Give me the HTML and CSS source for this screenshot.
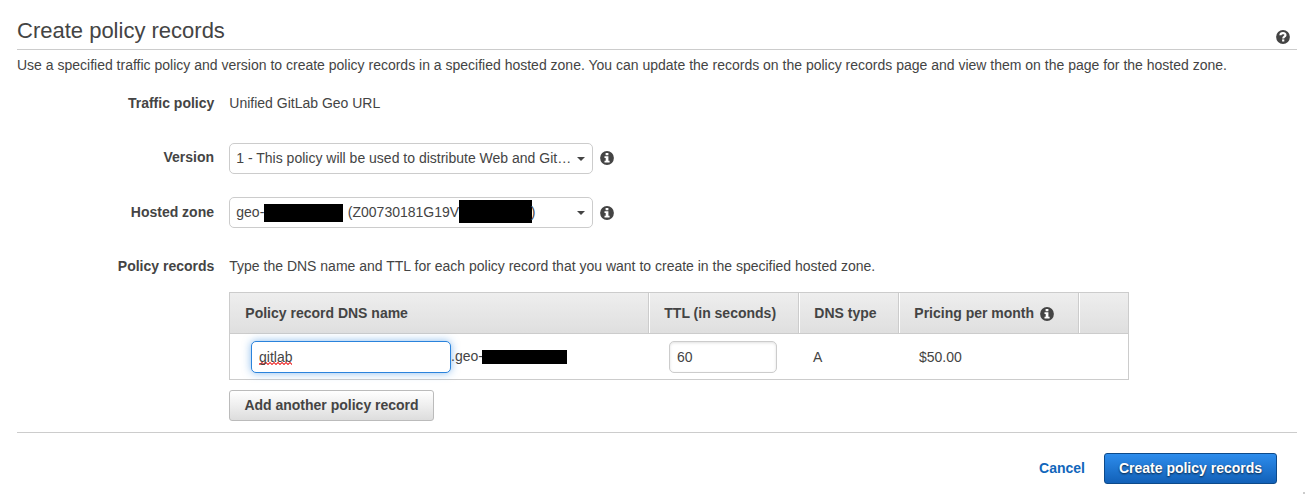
FILE: index.html
```html
<!DOCTYPE html>
<html lang="en">
<head>
<meta charset="utf-8">
<title>Create policy records</title>
<link rel="stylesheet" href="styles.css">
</head>
<body>
<svg class="defs" aria-hidden="true">
  <symbol id="info" viewBox="0 0 14 14">
    <circle cx="7" cy="7" r="6.9" fill="#444"/>
    <path d="M5.6 2h2.8v2.3H5.6zM4.5 5.2h3.9v4.5h1.2v1.7H4.5V9.7h1.2V6.9H4.5z" fill="#fff"/>
  </symbol>
</svg>
<main class="page">
  <header class="head">
    <h1 class="title">Create policy records</h1>
    <svg class="icon help" viewBox="0 0 14 14" role="img" aria-label="Help">
      <circle cx="7" cy="7" r="6.9" fill="#444"/>
      <path d="M4.4 5.3C4.5 2.5 9.6 2.4 9.5 5.1 9.4 6.8 7.2 6.6 7.2 8.5" fill="none" stroke="#fff" stroke-width="2.1"/>
      <path d="M6.1 9.4h2.2v2.1H6.1z" fill="#fff"/>
    </svg>
  </header>
  <p class="intro">Use a specified traffic policy and version to create policy records in a specified hosted zone. You can update the records on the policy records page and view them on the page for the hosted zone.</p>

  <div class="row row-policy"><span class="label">Traffic policy</span><span>Unified GitLab Geo URL</span></div>
  <div class="row row-select">
    <span class="label">Version</span>
    <div class="select"><span class="value">1 - This policy will be used to distribute Web and Git…</span><i class="caret"></i></div>
    <svg class="icon info"><use href="#info"/></svg>
  </div>
  <div class="row row-select">
    <span class="label">Hosted zone</span>
    <div class="select"><span class="value">geo-<i class="mask mask-name"></i>(Z00730181G19V<i class="mask mask-id"></i><span class="paren">)</span></span><i class="caret"></i></div>
    <svg class="icon info"><use href="#info"/></svg>
  </div>
  <div class="row row-records"><span class="label">Policy records</span><span>Type the DNS name and TTL for each policy record that you want to create in the specified hosted zone.</span></div>

  <section class="records">
    <div class="grid thead">
      <div class="th">Policy record DNS name</div>
      <div class="th">TTL (in seconds)</div>
      <div class="th">DNS type</div>
      <div class="th">Pricing per month<svg class="icon th-icon"><use href="#info"/></svg></div>
      <div class="th"></div>
    </div>
    <div class="grid tbody">
      <div class="td dns"><div class="field focused"><span class="typo">gitlab</span></div><span class="suffix">.geo-<i class="mask mask-domain"></i></span></div>
      <div class="td ttl"><div class="field short">60</div></div>
      <div class="td type">A</div>
      <div class="td price">$50.00</div>
      <div class="td"></div>
    </div>
  </section>
  <button class="btn add">Add another policy record</button>

  <footer class="foot">
    <a class="cancel">Cancel</a>
    <button class="btn primary">Create policy records</button>
  </footer>
</main>
<i class="grip"></i>
</body>
</html>
```
FILE: styles.css
```css
* { box-sizing: border-box; }
body {
  margin: 0;
  background: #fff;
  color: #444;
  font: 14px/20px "Liberation Sans", Arial, sans-serif;
  overflow: hidden;
}
.defs { display: none; }
.page { padding: 0 8px 0 17px; }
.icon { width: 14px; height: 14px; flex: none; display: block; }
.head {
  display: flex;
  justify-content: space-between;
  height: 50px;
  border-bottom: 1px solid #ccc;
}
.title { margin: 16px 0 0; font-size: 22px; line-height: 30px; font-weight: 400; }
.help { margin: 30px 7px 0 0; }
.intro { margin: 5px 0 0; white-space: nowrap; }
.row { display: flex; }
.label { width: 197.3px; margin-right: 15px; text-align: right; font-weight: 700; flex: none; }
.row-policy { margin-top: 18px; }
.row-policy + .row-select { margin-top: 30px; }
.row-select { height: 31px; margin-top: 23px; }
.row-select .label { width: 197px; padding-top: 4px; }
.row-select + .row-select .label { padding-top: 5px; }
.row-records { margin-top: 28px; }
.select {
  display: flex;
  align-items: center;
  justify-content: space-between;
  width: 364px;
  height: 31px;
  padding: 0 7px 2px 6px;
  border: 1px solid #ccc;
  border-radius: 5px;
  white-space: nowrap;
}
.value { display: flex; align-items: center; height: 27px; padding-left: 0.3px; }
.caret { border: 4px solid transparent; border-top-color: #444; border-bottom: 0; margin-top: 2px; }
.info { margin: 8px 0 0 7px; }
.row-select + .row-select .info { margin-top: 9px; }
.row-policy + .row-select .info { margin-top: 8px; }
.row-policy + .row-select .label { padding-top: 4px; }
.mask { display: block; background: #000; flex: none; }
.mask-name { width: 79px; height: 18px; margin: 2px 4.5px 0 0; }
.mask-id { width: 73px; height: 23px; }
.paren { margin-left: -1.3px; }
.mask-domain { width: 85px; height: 14px; margin: 2px 0 0 -1px; }
.records { width: 900px; height: 88px; margin: 16px 0 0 212px; border: 1px solid #ccc; }
.grid { display: grid; grid-template-columns: 419px 150px 100px 180px 49px; }
.thead {
  height: 41px;
  border-bottom: 1px solid #ccc;
  background: linear-gradient(#eee, #dfdfdf);
  font-weight: 700;
}
.th { display: flex; align-items: center; padding-left: 15.3px; border-right: 1px solid #ccc; }
.th + .th { padding-left: 14.3px; border-left: 1px solid #fff; }
.th:last-child { border-right: 0; }
.th-icon { margin: 2px 0 0 6px; }
.tbody { height: 45px; }
.td { display: flex; align-items: center; }
.dns { padding-left: 21px; }
.ttl { padding-left: 20px; }
.type { padding-left: 14px; }
.price { padding-left: 20px; }
.field {
  width: 200px;
  height: 32px;
  padding: 5px 7px;
  border: 1px solid #ccc;
  border-radius: 5px;
  box-shadow: inset 0 1px 3px rgba(0, 0, 0, .12);
  background: #fff;
}
.focused { border-color: #2a83dc; box-shadow: 0 0 8px rgba(42, 131, 220, .55); }
.short { width: 108px; }
.typo {
  display: inline-block;
  height: 18px;
  line-height: 20px;
  background: radial-gradient(circle at 1px 1px, #e33 0.6px, transparent 1.1px) 0 100% / 4px 2px repeat-x,
              radial-gradient(circle at 1px 1px, #e33 0.6px, transparent 1.1px) 2px calc(100% - 1px) / 4px 2px repeat-x;
}
.suffix { display: flex; align-items: center; margin-top: -2px; }
.btn {
  display: block;
  height: 31px;
  padding: 0 0 2px;
  border-radius: 3px;
  font: 700 14px/20px "Liberation Sans", Arial, sans-serif;
}
.add {
  width: 205px;
  margin: 10px 0 0 212px;
  border: 1px solid #bbb;
  color: #444;
  background: linear-gradient(#fff, #ddd);
}
.foot {
  display: flex;
  justify-content: flex-end;
  margin-top: 11px;
  padding: 20px 20px 0 0;
  border-top: 1px solid #ccc;
}
.cancel { margin: 5px 19px 0 0; color: #1166bb; font-weight: 700; }
.primary {
  width: 173px;
  border: 1px solid #0d4a8a;
  color: #fff;
  background: linear-gradient(#2d8cec, #1261b8);
  text-shadow: 0 1px 2px rgba(0, 0, 0, .7);
}
.grip {
  position: absolute;
  right: 0;
  bottom: 0;
  width: 2px;
  height: 2px;
  background: #ccc;
}
```
